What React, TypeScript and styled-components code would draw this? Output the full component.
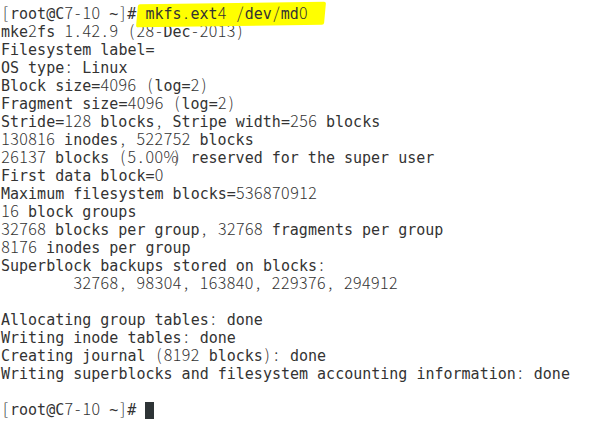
import React from "react";
import styled, { createGlobalStyle } from "styled-components";

const Global = createGlobalStyle`
  html, body { margin: 0; padding: 0; background: #ffffff; }
  #root { width: 607px; height: 428px; overflow: hidden; }
`;

const Screen = styled.div`
  box-sizing: border-box;
  width: 607px;
  height: 428px;
  padding: 5px 0 0 1px;
  background: #ffffff;
  color: #333333;
  font-family: "DejaVu Sans Mono", "Liberation Mono", monospace;
  font-size: 15px;
  line-height: 18px;
`;

const Line = styled.div`
  white-space: pre;
  height: 18px;
`;

const Alt = styled.span`
  display: inline-block;
  width: 9.03px;
  text-align: center;
  font-family: "Noto Sans CJK SC", "DejaVu Sans", sans-serif;
  font-weight: 300;
  font-size: 16px;
  line-height: 14px;
  vertical-align: baseline;
`;

const Mark = styled.span`
  position: relative;
  z-index: 0;
  &::before {
    content: "";
    position: absolute;
    z-index: -1;
    left: -8px;
    right: -18px;
    top: -2px;
    bottom: -3px;
    background: #ffff00;
    transform: rotate(-0.8deg) skewX(-6deg);
    border-radius: 2px;
  }
`;

const Cursor = styled.span`
  display: inline-block;
  width: 9px;
  height: 17px;
  background: #2e3436;
  vertical-align: top;
  margin-top: 1px;
`;

const ALT = /[0-9\[\]().,:\-%\/]/;

function T({ text }: { text: string }) {
  const parts: React.ReactNode[] = [];
  let buf = "";
  let k = 0;
  for (const ch of text) {
    if (ALT.test(ch)) {
      if (buf) parts.push(buf);
      buf = "";
      parts.push(<Alt key={k++}>{ch}</Alt>);
    } else buf += ch;
  }
  if (buf) parts.push(buf);
  return <>{parts}</>;
}

const lines = [
  "mke2fs 1.42.9 (28-Dec-2013)",
  "Filesystem label=",
  "OS type: Linux",
  "Block size=4096 (log=2)",
  "Fragment size=4096 (log=2)",
  "Stride=128 blocks, Stripe width=256 blocks",
  "130816 inodes, 522752 blocks",
  "26137 blocks (5.00%) reserved for the super user",
  "First data block=0",
  "Maximum filesystem blocks=536870912",
  "16 block groups",
  "32768 blocks per group, 32768 fragments per group",
  "8176 inodes per group",
  "Superblock backups stored on blocks:",
  "        32768, 98304, 163840, 229376, 294912",
  "",
  "Allocating group tables: done",
  "Writing inode tables: done",
  "Creating journal (8192 blocks): done",
  "Writing superblocks and filesystem accounting information: done",
  "",
];

export default function App() {
  return (
    <>
      <Global />
      <Screen>
        <Line>
          <T text="[root@C7-10 ~]# " />
          <Mark>
            <T text="mkfs.ext4 /dev/md0" />
          </Mark>
        </Line>
        {lines.map((l, i) => (
          <Line key={i}>
            <T text={l} />
          </Line>
        ))}
        <Line>
          <T text="[root@C7-10 ~]# " />
          <Cursor />
        </Line>
      </Screen>
    </>
  );
}
